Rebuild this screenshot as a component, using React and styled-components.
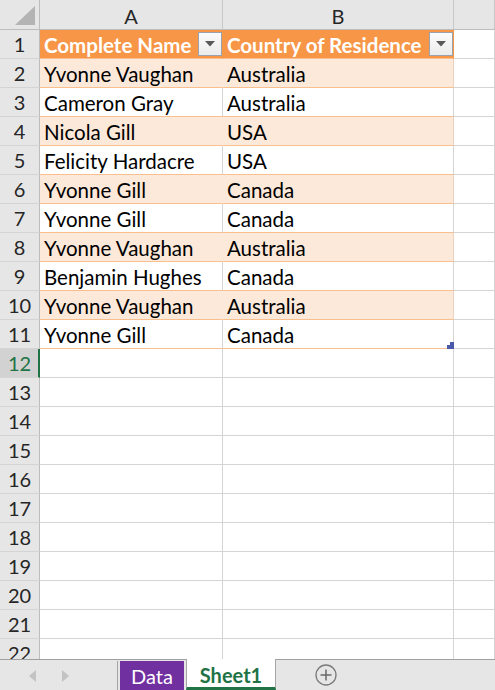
import React from "react";
import styled, { createGlobalStyle } from "styled-components";

const Global = createGlobalStyle`
  html, body { margin: 0; padding: 0; background: #fff; }
  body { font-family: "Lato", "Open Sans", sans-serif; }
`;

const FONT = `"Lato", "Open Sans", sans-serif`;

const Window = styled.div`
  width: 495px;
  height: 690px;
  display: flex;
  flex-direction: column;
  overflow: hidden;
  background: #fff;
  font-family: ${FONT};
`;

const Sheet = styled.div`
  height: 659px;
  overflow: hidden;
  display: grid;
  grid-template-columns: 40px 183px 231px 1fr;
  grid-auto-rows: 29px;
  grid-template-rows: 30px;
  align-content: start;
`;

const Corner = styled.div`
  background: #e6e6e6;
  border-right: 1px solid #bdbdbd;
  border-bottom: 1px solid #bdbdbd;
  display: flex;
  align-items: flex-end;
  justify-content: flex-end;
  padding: 0 4px 4px 0;
  box-sizing: border-box;
`;

const ColHead = styled.div`
  background: #e6e6e6;
  border-right: 1px solid #c8c8c8;
  border-bottom: 1px solid #bdbdbd;
  display: flex;
  align-items: center;
  justify-content: center;
  font-size: 20px;
  color: #262626;
  padding-top: 2px;
  box-sizing: border-box;
`;

const RowHead = styled.div`
  background: ${(p) => (p.$selected ? "#d2d2d2" : "#e6e6e6")};
  color: ${(p) => (p.$selected ? "#217346" : "#262626")};
  border-right: ${(p) => (p.$selected ? "2px solid #217346" : "1px solid #bdbdbd")};
  border-bottom: 1px solid #d4d4d4;
  display: flex;
  align-items: center;
  justify-content: center;
  font-size: 20px;
  padding-left: ${(p) => (p.$selected ? "1px" : "0")};
  box-sizing: border-box;
`;

const Cell = styled.div`
  position: relative;
  box-sizing: border-box;
  display: flex;
  align-items: center;
  justify-content: space-between;
  padding-left: 4px;
  padding-top: 1px;
  font-size: 20.5px;
  white-space: nowrap;
  overflow: visible;
  color: ${(p) => (p.$kind === "head" ? "#fff" : "#000")};
  font-weight: ${(p) => (p.$kind === "head" ? 700 : 400)};
  background: ${(p) =>
    p.$kind === "head" ? "#f79646" : p.$kind === "band" ? "#fde9d9" : "#fff"};
  border-bottom: 1px solid
    ${(p) => (p.$kind ? "#fabf8f" : "#d4d4d4")};
  border-right: 1px solid
    ${(p) =>
      p.$kind === "head"
        ? "#f79646"
        : p.$kind === "band"
        ? p.$last
          ? "#e9d2c2"
          : "#fde9d9"
        : "#d4d4d4"};
`;

const FilterBtn = styled.div`
  width: 24px;
  height: 24px;
  box-sizing: border-box;
  border: 1px solid #9aa3ad;
  background: linear-gradient(#fbfbfb, #ececec);
  display: flex;
  align-items: center;
  justify-content: center;
  margin-top: -1px;
  flex: none;
`;

const Handle = styled.svg`
  position: absolute;
  right: -1px;
  bottom: -1px;
`;

const TabBar = styled.div`
  height: 31px;
  box-sizing: border-box;
  border-top: 1px solid #a0a0a0;
  background: #e6e6e6;
  display: flex;
  align-items: stretch;
`;

const Nav = styled.div`
  width: 118px;
  display: flex;
  align-items: center;
  gap: 26px;
  padding-left: 29px;
  box-sizing: border-box;
  border-right: 1px solid #a6a6a6;
  margin: 1px 0 0;
`;

const Tab = styled.div`
  display: flex;
  align-items: center;
  justify-content: center;
  font-family: ${FONT};
  font-size: 20px;
  box-sizing: border-box;
  width: ${(p) => p.$w}px;
  margin-left: ${(p) => p.$ml}px;
  ${(p) =>
    p.$active
      ? `
    background: #fff;
    color: #217346;
    font-weight: 700;
    margin-top: -1px;
    border-left: 1px solid #a6a6a6;
    border-right: 1px solid #a6a6a6;
    border-bottom: 3px solid #217346;
    padding-top: 3px;
  `
      : `
    background: #7030a0;
    color: #fff;
    margin-top: 1px;
  `}
`;

const AddArea = styled.div`
  display: flex;
  align-items: center;
  padding-left: 39px;
`;

const Caret = () => (
  <svg width="10" height="6" viewBox="0 0 10 6">
    <path d="M0 0 H10 L5 5.5 Z" fill="#595959" />
  </svg>
);

const rows = [
  ["Yvonne Vaughan", "Australia"],
  ["Cameron Gray", "Australia"],
  ["Nicola Gill", "USA"],
  ["Felicity Hardacre", "USA"],
  ["Yvonne Gill", "Canada"],
  ["Yvonne Gill", "Canada"],
  ["Yvonne Vaughan", "Australia"],
  ["Benjamin Hughes", "Canada"],
  ["Yvonne Vaughan", "Australia"],
  ["Yvonne Gill", "Canada"],
];

export default function App() {
  const cells = [];
  cells.push(
    <Corner key="corner">
      <svg width="20" height="19" viewBox="0 0 20 19">
        <path d="M20 0 V19 H0 Z" fill="#b4b4b4" />
      </svg>
    </Corner>
  );
  cells.push(<ColHead key="ha">A</ColHead>);
  cells.push(<ColHead key="hb">B</ColHead>);
  cells.push(<ColHead key="hc" />);

  cells.push(<RowHead key="r1">1</RowHead>);
  cells.push(
    <Cell key="c1a" $kind="head">
      Complete Name
      <FilterBtn><Caret /></FilterBtn>
    </Cell>
  );
  cells.push(
    <Cell key="c1b" $kind="head" $last>
      Country of Residence
      <FilterBtn><Caret /></FilterBtn>
    </Cell>
  );
  cells.push(<Cell key="c1c" />);

  rows.forEach((r, i) => {
    const n = i + 2;
    const kind = i % 2 === 0 ? "band" : "plain";
    cells.push(<RowHead key={"r" + n}>{n}</RowHead>);
    cells.push(
      <Cell key={"a" + n} $kind={kind}>
        {r[0]}
      </Cell>
    );
    cells.push(
      <Cell key={"b" + n} $kind={kind} $last>
        {r[1]}
        {n === 11 && (
          <Handle width="7" height="7" viewBox="0 0 7 7">
            <path d="M3 0 H7 V7 H0 V3 H3 Z" fill="#4a5aa8" />
          </Handle>
        )}
      </Cell>
    );
    cells.push(<Cell key={"c" + n} />);
  });

  for (let n = 12; n <= 22; n++) {
    cells.push(
      <RowHead key={"r" + n} $selected={n === 12}>
        {n}
      </RowHead>
    );
    cells.push(<Cell key={"a" + n} />);
    cells.push(<Cell key={"b" + n} />);
    cells.push(<Cell key={"c" + n} />);
  }

  return (
    <>
      <Global />
      <Window>
        <Sheet>{cells}</Sheet>
        <TabBar>
          <Nav>
            <svg width="7" height="12" viewBox="0 0 7 12">
              <path d="M7 0 V12 L0 6 Z" fill="#c3c3c3" />
            </svg>
            <svg width="7" height="12" viewBox="0 0 7 12">
              <path d="M0 0 V12 L7 6 Z" fill="#c3c3c3" />
            </svg>
          </Nav>
          <Tab $w={64} $ml={2}>Data</Tab>
          <Tab $w={90} $ml={2} $active>Sheet1</Tab>
          <AddArea>
            <svg width="22" height="22" viewBox="0 0 22 22">
              <circle cx="11" cy="11" r="10" fill="none" stroke="#7a7a7a" strokeWidth="1.3" />
              <path d="M11 5.5 V16.5 M5.5 11 H16.5" stroke="#6a6a6a" strokeWidth="1.5" />
            </svg>
          </AddArea>
        </TabBar>
      </Window>
    </>
  );
}
